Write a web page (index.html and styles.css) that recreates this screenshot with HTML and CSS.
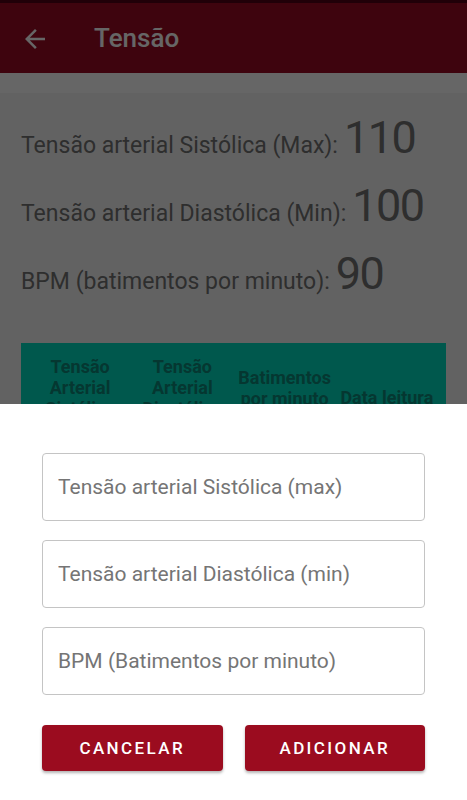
FILE: index.html
```html
<!DOCTYPE html>
<html lang="pt">
<head>
    <meta charset="UTF-8">
    <meta name="viewport" content="width=device-width, initial-scale=1.0">
    <title>Tensão</title>
    <link rel="stylesheet" href="styles.css">
</head>
<body>
    <header class="app-bar">
        <svg class="back-icon" viewBox="0 0 24 24"><path d="M20 11H7.83l5.59-5.59L12 4l-8 8 8 8 1.41-1.41L7.83 13H20v-2z"/></svg>
        <h1>Tensão</h1>
    </header>

    <main class="content">
        <div class="panel">
            <div class="reading">
                <span class="label">Tensão arterial Sistólica (Max):</span>
                <span class="value">110</span>
            </div>
            <div class="reading">
                <span class="label">Tensão arterial Diastólica (Min):</span>
                <span class="value">100</span>
            </div>
            <div class="reading">
                <span class="label">BPM (batimentos por minuto):</span>
                <span class="value">90</span>
            </div>

            <div class="table">
                <div class="table-head">
                    <div class="cell">Tensão Arterial Sistólica</div>
                    <div class="cell">Tensão Arterial Diastólica</div>
                    <div class="cell">Batimentos por minuto</div>
                    <div class="cell cell-low">Data leitura</div>
                </div>
                <div class="table-row">
                    <div class="cell">110</div>
                    <div class="cell">100</div>
                    <div class="cell">90</div>
                    <div class="cell">12/03/2021</div>
                </div>
            </div>
        </div>
    </main>

    <!-- Bottom sheet for new reading -->
    <div class="scrim"></div>
    <div class="sheet">
        <div class="fields">
            <input type="text" placeholder="Tensão arterial Sistólica (max)">
            <input type="text" placeholder="Tensão arterial Diastólica (min)">
            <input type="text" placeholder="BPM (Batimentos por minuto)">
        </div>
        <div class="actions">
            <button id="cancel">Cancelar</button>
            <button id="add">Adicionar</button>
        </div>
    </div>
</body>
</html>
```

FILE: styles.css
```css
body {
    font-family: Roboto, "Noto Sans", Arial, sans-serif;
    background-color: #f6f6f6;
    margin: 0;
    padding: 0;
}
.app-bar {
    height: 70px;
    border-top: 3px solid #500015;
    background-color: #9c0c24;
    display: flex;
    align-items: center;
    color: #fff;
}
.back-icon {
    width: 30px;
    height: 30px;
    fill: #fff;
    margin-left: 20px;
    margin-top: 1px;
}
.app-bar h1 {
    margin: 0 0 0 44px;
    font-size: 26px;
    font-weight: 500;
}
.content {
    padding-top: 20px;
    background-color: #fff;
}
.panel {
    background-color: #f6f6f6;
    padding: 18px 21px 40px;
}
.reading {
    display: flex;
    align-items: baseline;
    gap: 6px;
    height: 54px;
    margin-bottom: 14px;
    color: #737373;
}
.reading .label {
    font-size: 23px;
    line-height: 27px;
}
.reading .value {
    font-size: 45px;
    line-height: 54px;
    letter-spacing: -1.5px;
}
.table {
    margin-top: 42px;
}
.table-head {
    display: grid;
    grid-template-columns: repeat(4, 1fr);
    align-items: center;
    padding: 13px 8px;
    background-color: #00dcc0;
    color: #0e8a7b;
    font-size: 18px;
    font-weight: bold;
    line-height: 21px;
}
.cell {
    text-align: center;
}
.cell-low {
    margin-top: 20px;
}
.table-row {
    display: grid;
    grid-template-columns: repeat(4, 1fr);
    padding: 12px 8px;
    background-color: #fff;
    color: #737373;
    font-size: 16px;
}
.scrim {
    position: fixed;
    top: 0;
    left: 0;
    width: 100%;
    height: 100%;
    background: rgba(0, 0, 0, 0.6);
}
.sheet {
    position: fixed;
    left: 0;
    right: 0;
    bottom: 0;
    height: 396px;
    box-sizing: border-box;
    padding: 49px 42px 29px;
    background-color: #fff;
}
.fields {
    display: flex;
    flex-direction: column;
    gap: 19px;
}
.fields input {
    height: 68px;
    box-sizing: border-box;
    padding: 0 15px;
    border: 1px solid #c4c4c4;
    border-radius: 4px;
    font-family: Roboto, "Noto Sans", Arial, sans-serif;
    font-size: 21px;
    color: #333;
    outline: none;
}
.fields input::placeholder {
    color: #757575;
}
.actions {
    display: grid;
    grid-template-columns: 1fr 1fr;
    gap: 22px;
    margin-top: 30px;
}
.actions button {
    height: 46px;
    background-color: #9b0c1f;
    border: none;
    border-radius: 4px;
    color: #fff;
    font-family: Roboto, "Noto Sans", Arial, sans-serif;
    font-size: 17px;
    font-weight: 500;
    letter-spacing: 2.4px;
    text-transform: uppercase;
    box-shadow: 0 2px 3px rgba(0, 0, 0, 0.3);
    cursor: pointer;
}
```
